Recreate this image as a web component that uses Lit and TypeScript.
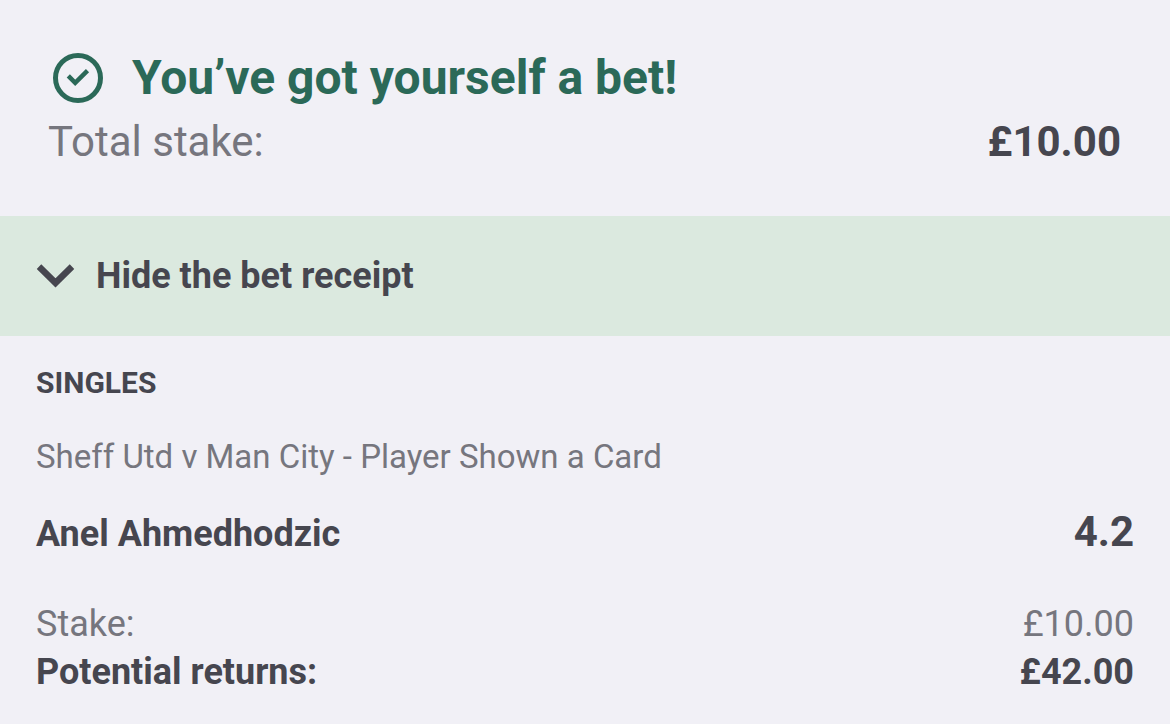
import { LitElement, html, css } from "lit";
import { customElement, state } from "lit/decorators.js";

@customElement("app-root")
export class AppRoot extends LitElement {
  @state() private open = true;

  static styles = css`
    :host {
      display: block;
      min-height: 100vh;
      background: #f1f0f6;
      color: #46464f;
      font-family: Roboto, sans-serif;
    }
    h1, h2, h3, p, dl, dt, dd { margin: 0; }
    .summary { padding: 48px 49px 44px 48px; }
    .title {
      display: flex;
      align-items: center;
      gap: 24px;
      color: #2b6958;
    }
    .title h1 { font-size: 48px; line-height: 58px; font-weight: 700; }
    .tick { width: 60px; height: 60px; flex: none; }
    .row { display: flex; justify-content: space-between; align-items: baseline; }
    .muted { color: #76767e; font-weight: 400; }
    .strong { font-weight: 700; }
    .total { padding-top: 4px; font-size: 42px; line-height: 60px; }
    .toggle {
      display: flex;
      align-items: center;
      gap: 20px;
      width: 100%;
      height: 120px;
      padding: 0 36px;
      border: 0;
      background: #dbe9df;
      color: inherit;
      font: 700 36px/48px Roboto, sans-serif;
      cursor: pointer;
    }
    .chevron { width: 40px; height: 40px; flex: none; }
    .receipt { padding: 24px 36px; }
    .kind { font-size: 30px; line-height: 46px; font-weight: 700; }
    .event { padding: 28px 0; font-size: 33px; line-height: 46px; }
    .pick { font-size: 36px; line-height: 48px; padding-bottom: 42px; }
    .odds { font-size: 42px; }
    .money { font-size: 36px; line-height: 48px; }
  `;

  render() {
    return html`
      <main>
        <section class="summary">
          <div class="title">
            <svg class="tick" viewBox="0 0 60 60" fill="none" stroke="currentColor" aria-hidden="true">
              <circle cx="30" cy="30" r="22.5" stroke-width="5" />
              <path d="M20.3 27.9l6.9 6.9 12.3-12.1" stroke-width="4.5" />
            </svg>
            <h1>You’ve got yourself a bet!</h1>
          </div>
          <dl class="row total">
            <dt class="muted">Total stake:</dt>
            <dd class="strong">£10.00</dd>
          </dl>
        </section>
        <button class="toggle" aria-expanded=${this.open ? "true" : "false"} @click=${() => (this.open = !this.open)}>
          <svg class="chevron" viewBox="0 0 40 40" fill="none" stroke="currentColor" stroke-width="6.4" aria-hidden="true">
            <path d="M3 10.6l16.5 16.3L36 10.6" />
          </svg>
          <span>${this.open ? "Hide" : "Show"} the bet receipt</span>
        </button>
        ${this.open
          ? html`<section class="receipt">
              <h2 class="kind">SINGLES</h2>
              <p class="event muted">Sheff Utd v Man City - Player Shown a Card</p>
              <div class="row pick strong">
                <span>Anel Ahmedhodzic</span>
                <span class="odds">4.2</span>
              </div>
              <dl class="row money muted">
                <dt>Stake:</dt>
                <dd>£10.00</dd>
              </dl>
              <dl class="row money strong">
                <dt>Potential returns:</dt>
                <dd>£42.00</dd>
              </dl>
            </section>`
          : null}
      </main>
    `;
  }
}
